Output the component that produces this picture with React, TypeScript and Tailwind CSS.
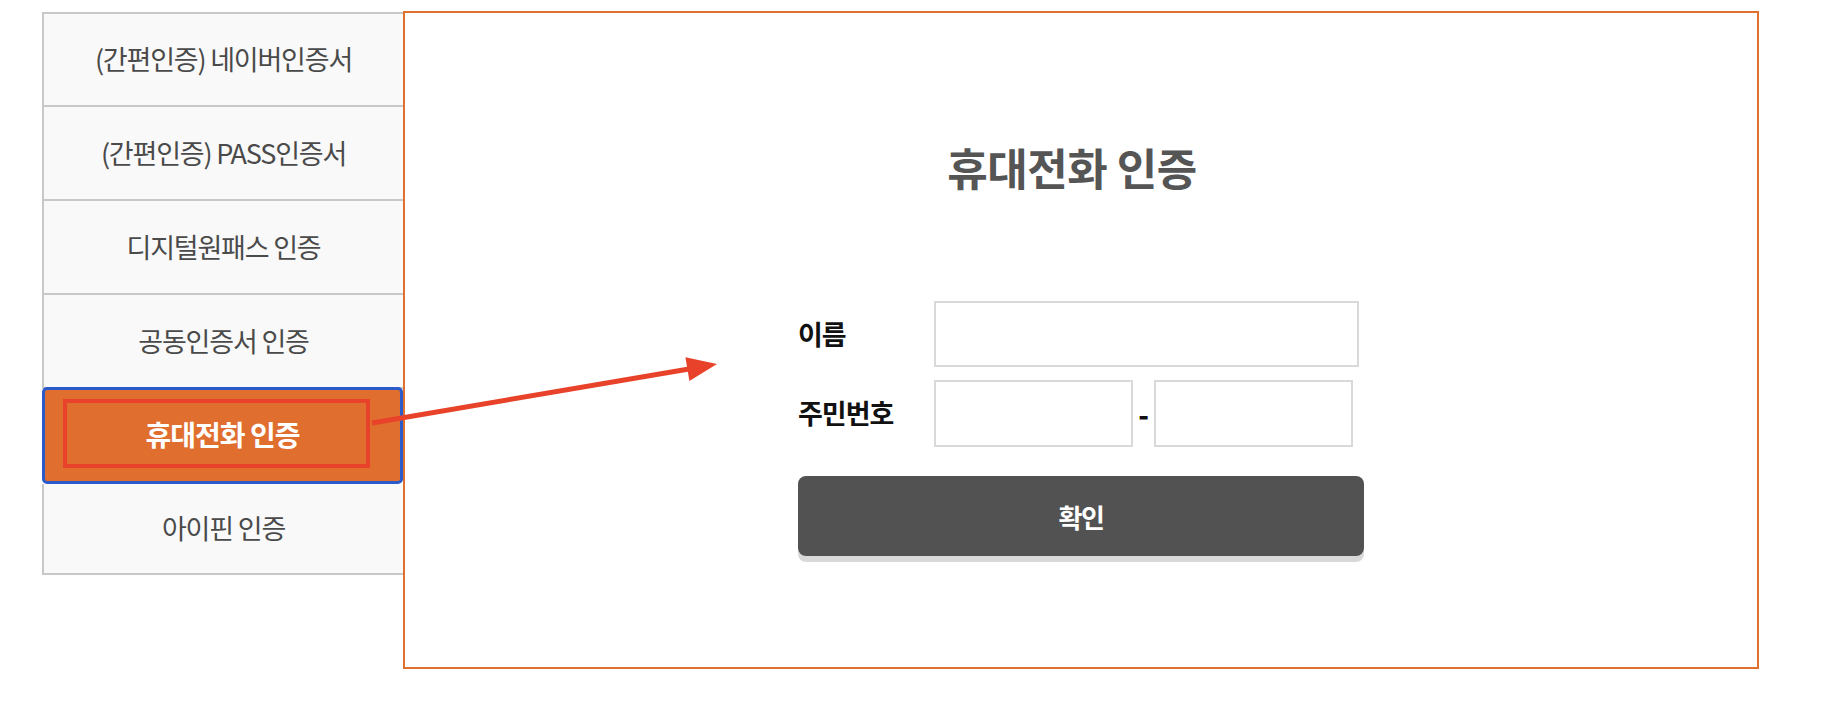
import React from 'react';

const font = { fontFamily: '"Noto Sans CJK KR", "Noto Sans", sans-serif' };

const items = [
  '(간편인증) 네이버인증서',
  '(간편인증) PASS인증서',
  '디지털원패스 인증',
  '공동인증서 인증',
];

const App: React.FC = () => {
  return (
    <div className="relative w-[1848px] h-[710px] bg-white flex items-start pt-[11px] pl-[42px]" style={font}>
      {/* left menu */}
      <div className="w-[361px] mt-[1px] flex flex-col">
        {items.map((label, i) => (
          <div
            key={label}
            className={`h-[94px] flex items-center justify-center bg-[#f9f9f9] border-l-2 border-b-2 border-[#c8c8c8] text-[27px] tracking-[-1.2px] text-[#4a4a4a] ${i === 0 ? 'border-t-2 h-[95px]' : ''}`}
          >
            {label}
          </div>
        ))}
        <div className="relative z-10 -mt-[2px] h-[97px] rounded-[5px] border-[3px] border-[#2a5bc9] bg-[#e06e2e] flex items-start pl-[18px] pt-[9px]">
          <div className="w-[307px] h-[69px] border-[4px] border-[#e8432a] flex items-center justify-center pl-[12px] text-white font-bold text-[28px] tracking-[-1px]">
            휴대전화 인증
          </div>
        </div>
        <div className="h-[91px] flex items-center justify-center bg-[#f9f9f9] border-l-2 border-b-2 border-[#c8c8c8] text-[27px] tracking-[-1.2px] text-[#4a4a4a]">
          아이핀 인증
        </div>
      </div>

      {/* main panel */}
      <div className="w-[1356px] h-[658px] border-2 border-[#e07030] flex flex-col items-center">
        <h1 className="mt-[132px] text-[44px] leading-[45px] font-bold tracking-[-0.5px] text-[#555555] -ml-[18px]">휴대전화 인증</h1>

        <div className="mt-[111px] w-[566px] flex flex-col">
          <div className="flex items-center h-[66px]">
            <span className="w-[136px] text-[27px] font-bold tracking-[-1px] text-[#111111]">이름</span>
            <input className="w-[425px] h-[66px] border-2 border-[#d9d9d9] bg-white outline-none" />
          </div>
          <div className="flex items-center h-[67px] mt-[13px]">
            <span className="w-[136px] text-[27px] font-bold tracking-[-1px] text-[#111111]">주민번호</span>
            <input className="w-[199px] h-[67px] border-2 border-[#d9d9d9] bg-white outline-none" />
            <span className="w-[21px] text-center text-[28px] font-black text-[#111111]">-</span>
            <input className="w-[199px] h-[67px] border-2 border-[#d9d9d9] bg-white outline-none" />
          </div>
          <button className="mt-[29px] w-full h-[80px] rounded-[8px] bg-[#525252] shadow-[0_6px_0_#d9d9d9] text-white font-bold text-[26px] tracking-[-1.5px]">
            확인
          </button>
        </div>
      </div>

      {/* annotation arrow */}
      <svg className="absolute left-0 top-0 pointer-events-none z-20" width="1848" height="710" viewBox="0 0 1848 710">
        <line x1="372" y1="423" x2="689" y2="369" stroke="#e8432a" strokeWidth="5" />
        <polygon points="717,364 689.4,380.9 685.4,357.3" fill="#e8432a" />
      </svg>
    </div>
  );
};

export default App;
